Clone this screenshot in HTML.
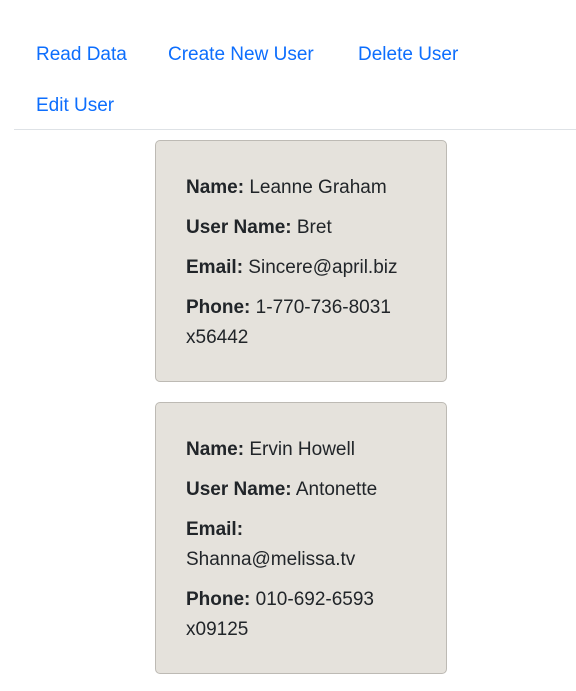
<!DOCTYPE html>
<html><head><meta charset="utf-8"><style>
body{margin:0;width:576px;height:691px;background:#fff;font-family:"Liberation Sans",sans-serif;color:#212529;position:relative;overflow:hidden}
.nav a{position:absolute;color:#0d6efd;text-decoration:none;font-size:19px;line-height:24px;white-space:nowrap}
.line{position:absolute;left:14px;right:0;top:129px;height:1px;background:#dee2e6}
.card{position:absolute;left:155px;width:229px;background:#e5e2dc;border:1px solid #bdbab4;border-radius:5px;padding:32px 31px 0 30px;font-size:19px}
.card p{margin:0 0 10px;line-height:30px}
b{font-weight:bold}
</style></head><body>
<div class="nav">
<a style="left:36px;top:43px">Read Data</a>
<a style="left:168px;top:43px">Create New User</a>
<a style="left:358px;top:43px">Delete User</a>
<a style="left:36px;top:94px">Edit User</a>
</div>
<div class="line"></div>
<div class="card" style="top:140px;height:208px">
<p><b>Name:</b> Leanne Graham</p>
<p><b>User Name:</b> Bret</p>
<p><b>Email:</b> Sincere@april.biz</p>
<p><b>Phone:</b> 1-770-736-8031<br>x56442</p>
</div>
<div class="card" style="top:402px;height:238px">
<p><b>Name:</b> Ervin Howell</p>
<p><b>User Name:</b> Antonette</p>
<p><b>Email:</b><br>Shanna@melissa.tv</p>
<p><b>Phone:</b> 010-692-6593<br>x09125</p>
</div>
</body></html>
